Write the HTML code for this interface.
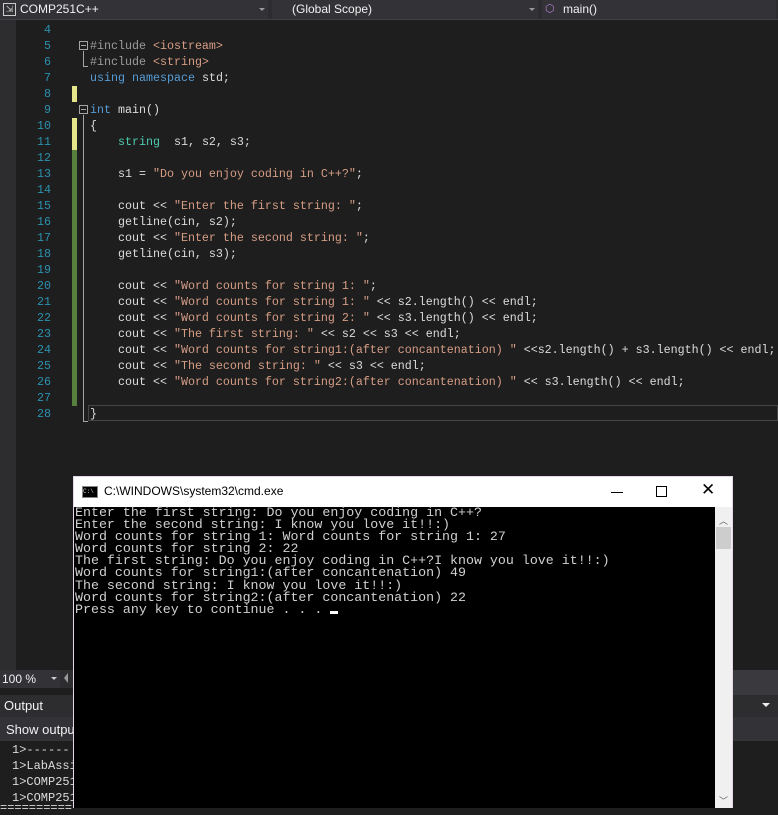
<!DOCTYPE html>
<html><head><meta charset="utf-8"><style>
*{margin:0;padding:0;box-sizing:border-box}
body{width:778px;height:811px;overflow:hidden;background:#1e1e1e;position:relative;font-family:"Liberation Sans",sans-serif}
.abs{position:absolute}
.top{left:0;top:0;width:778px;height:20px;background:#2d2d30;border-bottom:1px solid #3f3f46;color:#f1f1f1;font-size:12px}
.dd{top:0;height:19px;background:#333337;border-right:2px solid #2d2d30}
.code{font-family:"Liberation Mono",monospace;font-size:11.67px;line-height:16px;color:#dcdcdc;white-space:pre}
.ln{left:16px;width:35px;text-align:right;color:#2b91af;font-family:"Liberation Mono",monospace;font-size:11.67px;line-height:16px;white-space:pre}
.k{color:#569cd6}.t{color:#4ec9b0}.s{color:#d69d85}.p{color:#9b9b9b}
.term{font-family:"Liberation Mono",monospace;font-size:13.3px;line-height:12.1px;color:#d0d0d0;white-space:pre;letter-spacing:0}
</style></head><body>
<div class="abs" style="left:0;top:20px;width:16px;height:650px;background:#2d2d30"></div>
<div class="abs top">
 <div class="abs dd" style="left:0;width:270px"></div>
 <div class="abs" style="left:3px;top:3px;width:13px;height:13px;border:1px solid #ccc;font-size:9px;line-height:11px;text-align:center;color:#ccc">⇲</div>
 <div class="abs" style="left:20px;top:2px">COMP251C++</div>
 <div class="abs" style="left:259px;top:8px;border:3px solid transparent;border-top:3px solid #999"></div>
 <div class="abs dd" style="left:272px;width:268px"></div>
 <div class="abs" style="left:292px;top:2px">(Global Scope)</div>
 <div class="abs" style="left:529px;top:8px;border:3px solid transparent;border-top:3px solid #999"></div>
 <div class="abs dd" style="left:542px;width:236px"></div>
 <div class="abs" style="left:545px;top:4px;width:10px;height:11px;color:#b180d7;font-size:11px;line-height:11px">⬡</div>
 <div class="abs" style="left:563px;top:2px">main()</div>
</div>
<div class="abs ln" style="top:22px">4
5
6
7
8
9
10
11
12
13
14
15
16
17
18
19
20
21
22
23
24
25
26
27
28</div>
<div class="abs" style="left:72px;top:86px;width:5px;height:16px;background:#e5e58a"></div>
<div class="abs" style="left:72px;top:118px;width:5px;height:32px;background:#e5e58a"></div>
<div class="abs" style="left:72px;top:150px;width:5px;height:256px;background:#57803c"></div>
<div class="abs" style="left:79px;top:41px;width:9px;height:9px;border:1px solid #a5a5a5;font-size:0"><div style="margin:3px 1px;height:1px;background:#a5a5a5"></div></div>
<div class="abs" style="left:83px;top:51px;width:5px;height:16px;border-left:1px solid #a5a5a5;border-bottom:1px solid #a5a5a5"></div>
<div class="abs" style="left:79px;top:105px;width:9px;height:9px;border:1px solid #a5a5a5;font-size:0"><div style="margin:3px 1px;height:1px;background:#a5a5a5"></div></div>
<div class="abs" style="left:83px;top:115px;width:5px;height:307px;border-left:1px solid #a5a5a5;border-bottom:1px solid #a5a5a5"></div>
<div class="abs" style="left:88px;top:405px;width:690px;height:16px;border:1px solid #464646"></div>
<div class="abs code" style="left:90px;top:22px">
<span class="p">#include</span> <span class="s">&lt;iostream&gt;</span>
<span class="p">#include</span> <span class="s">&lt;string&gt;</span>
<span class="k">using</span> <span class="k">namespace</span> std;

<span class="k">int</span> main()
{
    <span class="t">string</span>  s1, s2, s3;

    s1 = <span class="s">"Do you enjoy coding in C++?"</span>;

    cout &lt;&lt; <span class="s">"Enter the first string: "</span>;
    getline(cin, s2);
    cout &lt;&lt; <span class="s">"Enter the second string: "</span>;
    getline(cin, s3);

    cout &lt;&lt; <span class="s">"Word counts for string 1: "</span>;
    cout &lt;&lt; <span class="s">"Word counts for string 1: "</span> &lt;&lt; s2.length() &lt;&lt; endl;
    cout &lt;&lt; <span class="s">"Word counts for string 2: "</span> &lt;&lt; s3.length() &lt;&lt; endl;
    cout &lt;&lt; <span class="s">"The first string: "</span> &lt;&lt; s2 &lt;&lt; s3 &lt;&lt; endl;
    cout &lt;&lt; <span class="s">"Word counts for string1:(after concantenation) "</span> &lt;&lt;s2.length() + s3.length() &lt;&lt; endl;
    cout &lt;&lt; <span class="s">"The second string: "</span> &lt;&lt; s3 &lt;&lt; endl;
    cout &lt;&lt; <span class="s">"Word counts for string2:(after concantenation) "</span> &lt;&lt; s3.length() &lt;&lt; endl;

}</div>
<!-- bottom VS panels -->
<div class="abs" style="left:0;top:670px;width:778px;height:18px;background:#2d2d30"></div>
<div class="abs" style="left:0;top:670px;width:60px;height:18px;background:#333337;color:#f1f1f1;font-size:12px;padding:2px 0 0 2px">100 %</div>
<div class="abs" style="left:51px;top:677px;border:3px solid transparent;border-top:3px solid #ccc"></div>
<div class="abs" style="left:64px;top:673px;border:5px solid transparent;border-right:4px solid #999;border-left:0"></div>
<div class="abs" style="left:732px;top:670px;width:46px;height:25px;background:#3a3a3e"></div>
<div class="abs" style="left:0;top:695px;width:778px;height:22px;background:#2d2d30"></div>
<div class="abs" style="left:4px;top:698px;color:#f1f1f1;font-size:13px">Output</div>
<div class="abs" style="left:762px;top:703px;border:4px solid transparent;border-top:4px solid #eee"></div>
<div class="abs" style="left:0;top:717px;width:778px;height:24px;background:#333337"></div>
<div class="abs" style="left:6px;top:722px;color:#f1f1f1;font-size:13px">Show output</div>
<div class="abs code" style="left:12px;top:742px;color:#dcdcdc;line-height:16px;font-size:12px">1&gt;------
1&gt;LabAssi
1&gt;COMP251
1&gt;COMP251</div>
<div class="abs code" style="left:0;top:802px;color:#dcdcdc;font-size:12px;line-height:12px">==========</div>
<!-- cmd window -->
<div class="abs" style="left:73px;top:476px;width:660px;height:332px;background:#fff;border:1px solid #e4d8e8">
 <div class="abs" style="left:8px;top:9px;width:16px;height:12px;background:#000;border:1px solid #888;color:#ccc;font-size:6px;line-height:10px;font-family:'Liberation Mono',monospace">C:\</div>
 <div class="abs" style="left:30px;top:7px;font-size:12px;color:#000">C:\WINDOWS\system32\cmd.exe</div>
 <div class="abs" style="left:537px;top:15px;width:12px;height:1px;background:#000"></div>
 <div class="abs" style="left:582px;top:9px;width:11px;height:11px;border:1px solid #000"></div>
 <div class="abs" style="left:627px;top:3px;font-size:17px;color:#000;line-height:20px">✕</div>
 <div class="abs" style="left:0;top:30px;width:641px;height:301px;background:#000"></div>
 <div class="abs" style="left:641px;top:30px;width:17px;height:301px;background:#f0f0f0"></div>
 <div class="abs" style="left:642px;top:50px;width:15px;height:22px;background:#cdcdcd"></div>
 <div class="abs" style="left:645px;top:37px;color:#606060;font-size:9px">︿</div>
 <div class="abs" style="left:645px;top:317px;color:#606060;font-size:9px">﹀</div>
 <div class="abs term" style="left:1px;top:30px">Enter the first string: Do you enjoy coding in C++?
Enter the second string: I know you love it!!:)
Word counts for string 1: Word counts for string 1: 27
Word counts for string 2: 22
The first string: Do you enjoy coding in C++?I know you love it!!:)
Word counts for string1:(after concantenation) 49
The second string: I know you love it!!:)
Word counts for string2:(after concantenation) 22
Press any key to continue . . . </div>
 <div class="abs" style="left:256px;top:134px;width:8px;height:3px;background:#fff"></div>
</div>
</body></html>
